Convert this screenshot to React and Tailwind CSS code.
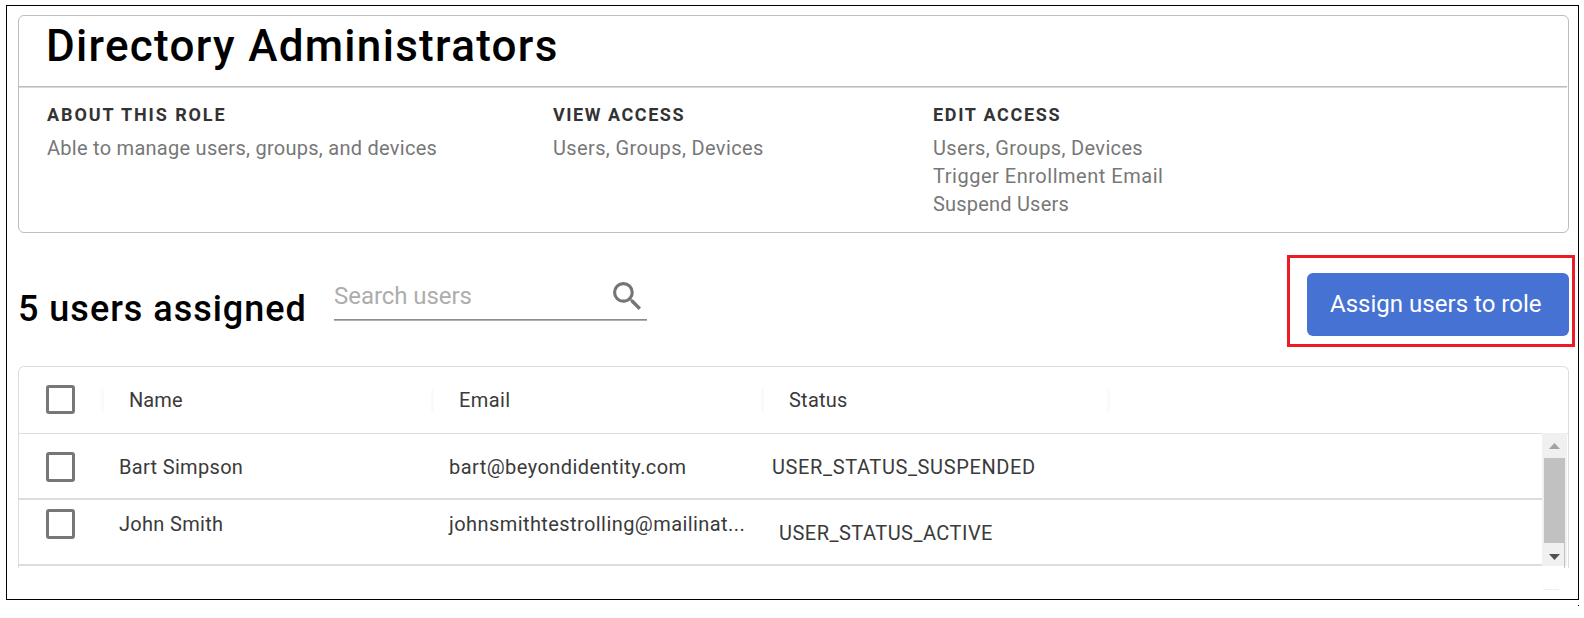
import React from "react";

function Checkbox({ sizeClass = "h-[30px]" }) {
  return (
    <span
      role="checkbox"
      aria-checked="false"
      className={`block w-[29px] shrink-0 rounded-[3px] border-3 border-[#777777] ${sizeClass}`}
    />
  );
}

function Divider() {
  return <span className="h-[23px] w-[3px] shrink-0 bg-[#fafafa]" />;
}

function AccessColumn({ title, titleClass, children }) {
  return (
    <section>
      <h2 className={`text-[18px] leading-5 font-bold text-[#333333] ${titleClass}`}>{title}</h2>
      <div className="mt-[9px] text-[20px] leading-7 text-[#777777]">{children}</div>
    </section>
  );
}

function RoleCard() {
  return (
    <div className="h-[218px] rounded-md border border-[#bdbdbd]">
      <header className="mr-px h-[72px] border-b border-[#d9d9d9]">
        <div className="h-[71px] border-b border-[#bdbdbd] pt-1 pl-[27px]">
          <h1 className="text-[44px] leading-[52px] font-medium tracking-[1.3px]">
            Directory Administrators
          </h1>
        </div>
      </header>
      <div className="grid grid-cols-[506px_380px_1fr] pt-[17px] pl-7">
        <AccessColumn title="ABOUT THIS ROLE" titleClass="tracking-[1.9px]">
          <p className="tracking-[0.27px]">Able to manage users, groups, and devices</p>
        </AccessColumn>
        <AccessColumn title="VIEW ACCESS" titleClass="tracking-[1.54px]">
          <p className="tracking-[0.37px]">Users, Groups, Devices</p>
        </AccessColumn>
        <AccessColumn title="EDIT ACCESS" titleClass="tracking-[1.68px]">
          <p className="tracking-[0.34px]">Users, Groups, Devices</p>
          <p className="tracking-[0.52px]">Trigger Enrollment Email</p>
          <p className="tracking-[0.2px]">Suspend Users</p>
        </AccessColumn>
      </div>
    </div>
  );
}

function Toolbar() {
  return (
    <div className="-mr-1.5 flex h-[133px] items-start">
      <h2 className="mt-[54px] w-[316px] text-[36px] leading-[44px] font-medium tracking-[0.98px]">
        5 users assigned
      </h2>
      <div className="mt-11 flex h-11 w-[313px] items-start justify-between border-b border-[#b0b0b0]">
        <div className="flex h-[43px] w-full items-start justify-between border-b border-[#8c8c8c]">
          <span className="pt-[5px] text-[24px] leading-7 tracking-[-0.05px] text-[#adadad]">
            Search users
          </span>
          <svg viewBox="3 3 17.49 17.49" className="mt-[5px] mr-[6px] size-7 fill-[#757575]">
            <path d="M15.5 14h-.79l-.28-.27A6.471 6.471 0 0 0 16 9.5 6.5 6.5 0 1 0 9.5 16c1.61 0 3.09-.59 4.23-1.57l.27.28v.79l5 4.99L20.49 19l-4.99-5zm-6 0C7.01 14 5 11.99 5 9.5S7.01 5 9.5 5 14 7.01 14 9.5 11.99 14 9.5 14z" />
          </svg>
        </div>
      </div>
      <div className="mt-[22px] ml-auto h-[92px] w-[288px] border-3 border-[#ed1c24] pt-[15px] pl-[17px]">
        <button className="h-[63px] w-[262px] rounded-md bg-[#4672d3] pb-0.5 pl-[23px] text-left text-[24px] leading-7 tracking-[0.02px] text-white">
          Assign users to role
        </button>
      </div>
    </div>
  );
}

function Scrollbar() {
  return (
    <div className="-mt-px flex h-[133px] w-[25px] flex-col items-center bg-[#f0f0f0]">
      <svg viewBox="0 0 11 6" className="mt-2.5 h-1.5 w-[11px] shrink-0 fill-[#a3a3a3]">
        <path d="M0 6 5.5 0 11 6z" />
      </svg>
      <div className="mt-[9px] h-[85px] w-[21px] shrink-0 bg-[#c1c1c1]" />
      <div className="flex h-[25px] w-[21px] shrink-0 justify-center border-r border-[#c1c1c1]">
        <svg viewBox="0 0 11 6" className="mt-[11px] h-1.5 w-[11px] fill-[#505050]">
          <path d="M0 0h11L5.5 6z" />
        </svg>
      </div>
    </div>
  );
}

function UsersTable() {
  return (
    <div className="h-[202px] rounded-t-md border border-b-0 border-[#dddddd] text-[20px] leading-7 text-[#3a3a3a]">
      <div className="flex h-[67px] items-center border-b border-[#dddddd] pl-[27px]">
        <div className="flex w-[55px] items-center pb-0.5"><Checkbox sizeClass="h-[29px]" /></div>
        <div className="flex w-[330px] items-center">
          <Divider />
          <span className="pl-[25px] tracking-[0.1px]">Name</span>
        </div>
        <div className="flex w-[330px] items-center">
          <Divider />
          <span className="pl-[25px] tracking-[0.4px]">Email</span>
        </div>
        <div className="flex w-[346px] items-center">
          <Divider />
          <span className="pl-[25px] tracking-[0.23px]">Status</span>
        </div>
        <Divider />
      </div>
      <div className="flex">
        <div className="w-[1523px]">
          <div className="flex h-[66px] border-b-2 border-[#dddddd] pl-[27px]">
            <div className="w-[73px] pt-[18px]"><Checkbox /></div>
            <span className="w-[330px] pt-[19px] tracking-[0.32px]">Bart Simpson</span>
            <span className="w-[323px] pt-[19px] tracking-[0.44px]">bart@beyondidentity.com</span>
            <span className="pt-[19px] tracking-[0.62px]">USER_STATUS_SUSPENDED</span>
          </div>
          <div className="flex h-[66px] border-b-2 border-[#dddddd] pl-[27px]">
            <div className="w-[73px] pt-[9px]"><Checkbox /></div>
            <span className="w-[330px] pt-2.5 tracking-[0.3px]">John Smith</span>
            <span className="w-[330px] pt-2.5 tracking-[0.42px]">johnsmithtestrolling@mailinat...</span>
            <span className="pt-[19px] tracking-[0.48px]">USER_STATUS_ACTIVE</span>
          </div>
        </div>
        <Scrollbar />
      </div>
    </div>
  );
}

export default function App() {
  return (
    <main className="h-[618px] w-[1584px] overflow-hidden bg-white pt-[5px] pl-1.5 font-[Roboto,sans-serif] text-black">
      <div className="h-[595px] w-[1573px] border border-black pt-[9px] pr-[9px] pl-[11px]">
        <RoleCard />
        <Toolbar />
        <UsersTable />
        <div className="mt-[21px] mr-2.5 ml-auto h-px w-4 bg-[#eeeeee]" />
      </div>
      <div className="mt-[5px] ml-[1572px] size-px bg-black" />
    </main>
  );
}
